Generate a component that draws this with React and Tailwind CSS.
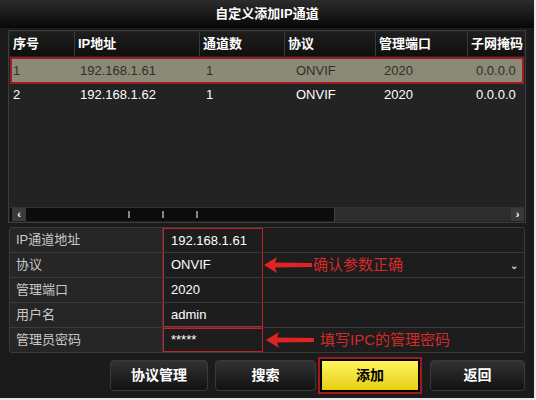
import React from "react";

const font = { fontFamily: '"Liberation Sans", "Noto Sans CJK SC", sans-serif' };

const cols = ["w-[65px]", "w-[125px]", "w-[85px]", "w-[91px]", "w-[92px]", "w-[58px]"];
const pads = ["pl-[3px]", "pl-[5px]", "pl-[6px]", "pl-[11px]", "pl-[8px]", "pl-[8px]"];
const padsSel = ["pl-[1px]", "pl-[3px]", "pl-[4px]", "pl-[9px]", "pl-[6px]", "pl-[6px]"];
const heads = ["序号", "IP地址", "通道数", "协议", "管理端口", "子网掩码"];
const rows = [
  ["1", "192.168.1.61", "1", "ONVIF", "2020", "0.0.0.0"],
  ["2", "192.168.1.62", "1", "ONVIF", "2020", "0.0.0.0"],
];

function Arrow() {
  return (
    <svg width="48" height="16" viewBox="0 0 48 16" className="shrink-0">
      <path d="M0 8 L13 0 L11 5.5 L48 6 L48 10 L11 10.5 L13 16 Z" fill="#e02424" />
    </svg>
  );
}

function Button({ children, active, w }) {
  if (active) {
    return (
      <div className="border-2 border-[#a3181c] p-[2px] bg-black">
        <div className="w-[96px] h-[29px] flex items-center justify-center bg-gradient-to-b from-[#fff45a] to-[#e6cf00] text-black font-bold text-[14px]">
          {children}
        </div>
      </div>
    );
  }
  return (
    <div className={`${w} h-[31px] flex items-center justify-center rounded-sm bg-gradient-to-b from-[#333] to-[#121212] border border-[#3a3a3a] text-white font-bold text-[14px]`}>
      {children}
    </div>
  );
}

export default function App() {
  const formRows = [
    ["IP通道地址", "192.168.1.61"],
    ["协议", "ONVIF"],
    ["管理端口", "2020"],
    ["用户名", "admin"],
    ["管理员密码", "*****"],
  ];

  return (
    <div style={font} className="w-[536px] h-[400px] bg-[#1b1b1b] flex flex-col border-r-2 border-b-2 border-[#e8e8e8] overflow-hidden">
      <div className="h-[28px] shrink-0 bg-gradient-to-b from-[#2c2c2c] to-[#080808] flex items-center justify-center text-white font-bold text-[13px]">
        自定义添加IP通道
      </div>

      <div className="mx-[8px] mt-[2px] h-[193px] border border-[#3c3c3c] bg-[#232323] flex flex-col p-[1px]">
        <div className="h-[24px] flex bg-gradient-to-b from-[#1e1e1e] to-[#0f0f0f] text-white font-bold text-[13px]">
          {heads.map((h, i) => (
            <div key={h} className={`${cols[i]} shrink-0 flex items-center pl-[3px] border-r border-[#3a3a3a] whitespace-nowrap overflow-hidden`}>
              {h}
            </div>
          ))}
        </div>
        <div className="border-2 border-[#a01c24] mt-[1px] bg-[#8a8a76] overflow-hidden">
          <div className="h-[23px] flex text-[#2f2f2a] text-[13px]">
            {rows[0].map((c, i) => (
              <div key={i} className={`${cols[i]} ${padsSel[i]} shrink-0 flex items-center whitespace-nowrap`}>
                {c}
              </div>
            ))}
          </div>
        </div>
        <div className="h-[21px] flex text-white text-[13px] overflow-hidden">
          {rows[1].map((c, i) => (
            <div key={i} className={`${cols[i]} ${pads[i]} shrink-0 flex items-center whitespace-nowrap`}>
              {c}
            </div>
          ))}
        </div>
        <div className="flex-1" />
        <div className="h-[14px] flex items-center bg-[#0c0c0c] border-t border-[#333]">
          <div className="w-[14px] h-[13px] ml-[2px] bg-[#3a3a3a] flex items-center justify-center text-white text-[11px] font-bold leading-none">‹</div>
          <div className="w-[308px] h-full relative">
            <span className="absolute left-[102px] top-[3px] w-[2px] h-[7px] bg-[#888]" />
            <span className="absolute left-[136px] top-[3px] w-[2px] h-[7px] bg-[#888]" />
            <span className="absolute left-[170px] top-[3px] w-[2px] h-[7px] bg-[#888]" />
          </div>
          <div className="flex-1 h-full bg-[#2d2d2d] border-l border-[#444]" />
          <div className="w-[13px] h-[13px] bg-[#3a3a3a] flex items-center justify-center text-white text-[11px] font-bold leading-none">›</div>
        </div>
      </div>

      <div className="mx-[9px] mt-[4px] h-[126px] border border-[#3a3a3a] rounded-[3px] flex flex-col overflow-hidden">
        {formRows.map(([label, value], i) => (
          <div key={label} className={`flex-1 flex ${i < 4 ? "border-b border-[#3a3a3a]" : ""}`}>
            <div className="w-[153px] bg-[#262626] text-[#c8c8c8] text-[13px] flex items-center pl-[6px] border-r border-[#3a3a3a]">
              {label}
            </div>
            <div className="flex-1 flex items-center bg-[#1d1d1d] relative">
              <div
                className={`w-[100px] h-full flex items-center pl-[7px] text-white text-[13px] border-[#c0222a] border-x ${i === 0 ? "border-t" : ""} ${i === 4 ? "border border-[#c0222a] h-[25px]" : ""} ${i === 3 ? "border-b" : ""}`}
              >
                {value}
              </div>
              {i === 1 && (
                <div className="flex items-center ml-[1px] gap-[1px]">
                  <Arrow />
                  <span className="text-[#d42a2a] text-[15px]">确认参数正确</span>
                </div>
              )}
              {i === 4 && (
                <div className="flex items-center ml-[3px] gap-[6px]">
                  <Arrow />
                  <span className="text-[#d42a2a] text-[15px]">填写IPC的管理密码</span>
                </div>
              )}
              {i === 1 && (
                <span className="ml-auto mr-[6px] text-[#ccc] text-[10px] font-bold">⌄</span>
              )}
            </div>
          </div>
        ))}
      </div>

      <div className="flex-1 flex items-center pl-[110px]">
        <Button w="w-[98px]">协议管理</Button>
        <div className="ml-[7px]">
          <Button w="w-[101px]">搜索</Button>
        </div>
        <div className="ml-[2px]">
          <Button active>添加</Button>
        </div>
        <div className="ml-[8px]">
          <Button w="w-[95px]">返回</Button>
        </div>
      </div>
    </div>
  );
}
